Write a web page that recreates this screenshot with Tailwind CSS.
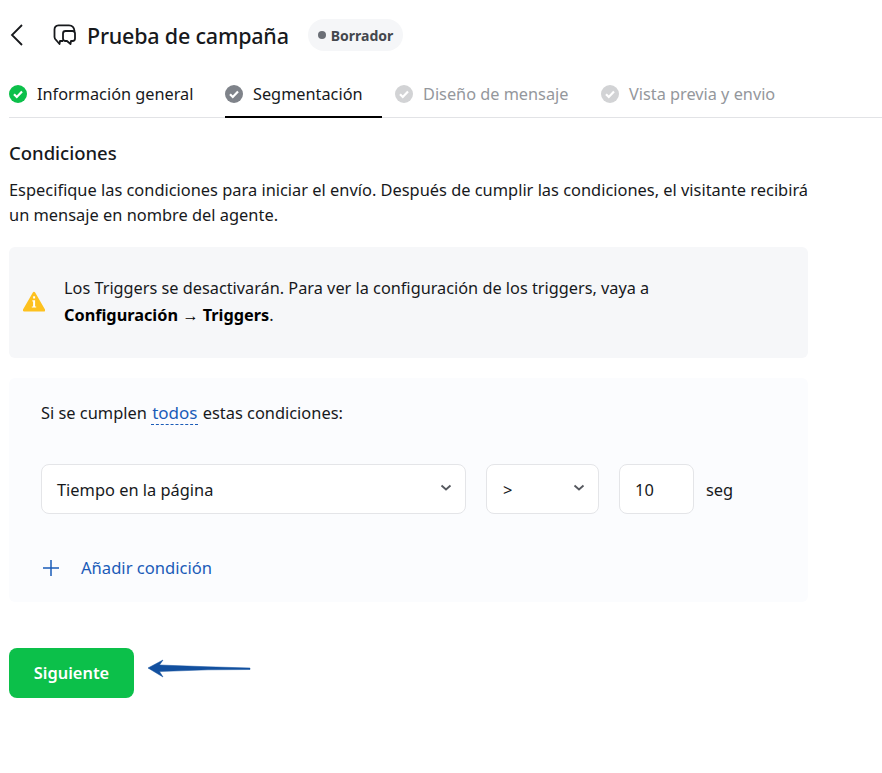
<!DOCTYPE html>
<html lang="es">
<head>
  <meta charset="UTF-8" />
  <script src="https://cdn.jsdelivr.net/npm/@tailwindcss/browser@4"></script>
</head>
<body class="bg-white text-[#17191c] font-['Noto_Sans',sans-serif] w-[882px] h-[773px] overflow-hidden">
  <!-- cabecera -->
  <header class="flex items-center h-[70px] pl-[9px]">
    <svg class="w-4 h-6 mr-[28px]" viewBox="0 0 16 24" fill="none" stroke="#17191c" stroke-width="1.8"><path d="M13 2 3 12l10 10"/></svg>
    <svg class="w-6 h-6 mr-[10px]" viewBox="0 0 24 24" fill="none" stroke="#17191c" stroke-width="1.8" stroke-linejoin="round"><path d="M10 18H7l-.5 3-3-3.500Q1.500 16 1.500 14V6.500q0-4 4-4.200H16q5 0 5.500 5.700"/><path d="M12.500 8h7q2.500 0 2.500 2.500v5q0 2.500-2.500 2.500H18l-.5 3-3.500-3h-1.500Q10 18 10 15.500v-5Q10 8 12.500 8Z"/></svg>
    <h1 class="text-[21.5px] font-medium tracking-[-0.2px] pt-[2px]">Prueba de campaña</h1>
    <span class="ml-[19px] flex items-center h-8 px-[10px] rounded-full bg-[#f5f6f8] text-[14px] font-bold text-[#44474d]"><span class="w-2 h-2 rounded-full bg-[#6b6f76] mr-[5px]"></span>Borrador</span>
  </header>

  <!-- pasos -->
  <nav class="ml-[9px] flex h-[48px] border-b border-[#e2e3e6] text-[16.3px]">
    <div class="flex items-center gap-[10px] w-[216px]">
      <svg class="w-[18px] h-[18px]" viewBox="0 0 18 18"><circle cx="9" cy="9" r="9" fill="#0cc04a"/><path d="m5 9.200 2.800 2.800L13 6.500" fill="none" stroke="#fff" stroke-width="2.200"/></svg>
      <span class="pt-[1px]">Información general</span>
    </div>
    <div class="flex items-center gap-[10px] w-[157px] h-[48px] border-b-2 border-black pt-[1px]">
      <svg class="w-[18px] h-[18px]" viewBox="0 0 18 18"><circle cx="9" cy="9" r="9" fill="#7f838a"/><path d="m5 9.200 2.800 2.800L13 6.500" fill="none" stroke="#fff" stroke-width="2.200"/></svg>
      <span class="pt-[1px]">Segmentación</span>
    </div>
    <div class="flex items-center gap-[10px] ml-[13px] w-[206px] text-[#94979c]">
      <svg class="w-[18px] h-[18px]" viewBox="0 0 18 18"><circle cx="9" cy="9" r="9" fill="#d2d3d5"/><path d="m5 9.200 2.800 2.800L13 6.500" fill="none" stroke="#fff" stroke-width="2.200"/></svg>
      <span class="pt-[1px]">Diseño de mensaje</span>
    </div>
    <div class="flex items-center gap-[10px] text-[#94979c]">
      <svg class="w-[18px] h-[18px]" viewBox="0 0 18 18"><circle cx="9" cy="9" r="9" fill="#d2d3d5"/><path d="m5 9.200 2.800 2.800L13 6.500" fill="none" stroke="#fff" stroke-width="2.200"/></svg>
      <span class="pt-[1px]">Vista previa y envio</span>
    </div>
  </nav>

  <main class="ml-[9px] w-[799px] relative">
    <h2 class="mt-[21px] text-[18.5px] leading-[28px] font-medium">Condiciones</h2>
    <p class="mt-[10px] text-[16.4px] leading-[25px] whitespace-nowrap">Especifique las condiciones para iniciar el envío. Después de cumplir las condiciones, el visitante recibirá<br>un mensaje en nombre del agente.</p>

    <div class="mt-[20px] h-[111px] rounded-md bg-[#f6f7f9] flex items-center pl-[14px] pb-[2px]">
      <svg class="w-[22px] h-[22px] mr-[19px] shrink-0" viewBox="0 0 20 20"><path d="M10 2 19 17.500H1Z" fill="#fdc11f" stroke="#fdc11f" stroke-width="2.400" stroke-linejoin="round"/><path d="M8.500 8.500H11V14h1v1H8v-1h1.200V9.500h-.7Z" fill="#fff"/><rect x="9.200" y="4.800" width="1.800" height="2" fill="#fff"/></svg>
      <p class="text-[16.3px] leading-[27px]">Los Triggers se desactivarán. Para ver la configuración de los triggers, vaya a<br><b class="font-bold text-black">Configuración → Triggers</b>.</p>
    </div>

    <div class="mt-[20px] h-[224px] rounded-md bg-[#fbfcfe] pl-[32px] pt-[22px]">
      <p class="text-[16.4px] leading-[26px]">Si se cumplen <span class="text-[#1a5bb8] border-b border-dashed border-[#1a5bb8] text-[17px] px-px">todos</span> estas condiciones:</p>

      <div class="mt-[38px] flex items-center text-[16.4px]">
        <div class="w-[425px] h-[50px] bg-white border border-[#e4e5e8] rounded-lg flex items-center justify-between pl-[15px] pr-[13px]">
          <span class="pt-[2px]">Tiempo en la página</span>
          <svg class="w-3 h-2 -mt-[3px]" viewBox="0 0 12 8" fill="none" stroke="#55585e" stroke-width="1.800"><path d="m1.500 1.500 4.500 4 4.500-4"/></svg>
        </div>
        <div class="ml-[20px] w-[113px] h-[50px] bg-white border border-[#e4e5e8] rounded-lg flex items-center justify-between pl-[16px] pr-[13px]">
          <span class="pt-[2px]">&gt;</span>
          <svg class="w-3 h-2 -mt-[3px]" viewBox="0 0 12 8" fill="none" stroke="#55585e" stroke-width="1.800"><path d="m1.500 1.500 4.500 4 4.500-4"/></svg>
        </div>
        <div class="ml-[20px] w-[75px] h-[50px] bg-white border border-[#e4e5e8] rounded-lg flex items-center pl-[15px] pt-[2px]">10</div>
        <span class="ml-[12px] pt-[2px]">seg</span>
      </div>

      <div class="mt-[41px] flex items-center text-[#1a5bb8] text-[16.6px]">
        <svg class="w-[18px] h-[18px] ml-[1px] mr-[21px]" viewBox="0 0 18 18" stroke="#1a5bb8" stroke-width="1.500"><path d="M9 1v16M1 9h16"/></svg>
        <span class="pt-[1px]">Añadir condición</span>
      </div>
    </div>

    <div class="mt-[46px] flex items-start">
      <button class="w-[125px] h-[50px] rounded-lg bg-[#0cc04a] text-white text-[16.4px] font-semibold">Siguiente</button>
      <svg class="ml-[14px] mt-[10px] w-[104px] h-[20px]" viewBox="0 0 104 20"><path d="M0 10 15 2 11.500 7 60 8.800 102 10 102 11.500 60 11.800 11.500 13.500 15 19Z" fill="#12509f" stroke="#12509f" stroke-width=".5" stroke-linejoin="round"/></svg>
    </div>
  </main>
</body>
</html>
